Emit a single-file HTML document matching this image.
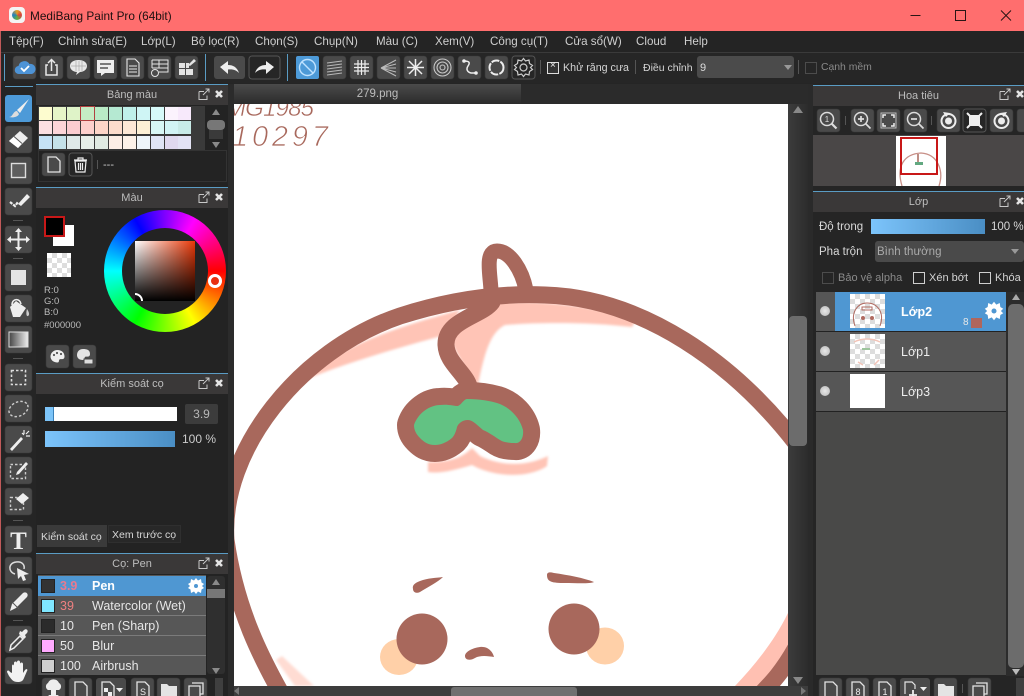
<!DOCTYPE html>
<html><head><meta charset="utf-8"><style>
html,body{margin:0;padding:0;width:1024px;height:696px;overflow:hidden;background:#252525}
body{position:relative;font-family:"Liberation Sans","DejaVu Sans",sans-serif;font-size:12px;color:#ddd}
.a{position:absolute}
.t{position:absolute;white-space:nowrap}
.m{position:absolute;white-space:nowrap;top:35px;font-size:11.6px;color:#cfcfcf}
.ph{position:absolute;height:20px;background:#3a3838;border-top:1px solid #5a9cc4;text-align:center;line-height:20px;color:#bdbdbd;font-size:11px}
.s{position:absolute;width:13px;height:12.5px}
.row{position:absolute;left:38px;width:168px;height:19px;background:#575757;border-bottom:1px solid #7b7b7b;color:#e6e6e6;line-height:21px;font-size:12.500px}
.row i{position:absolute;left:3px;top:3px;width:12px;height:12px;border:1px solid #222}
.row b{position:absolute;left:22px;font-weight:normal}
.row u{position:absolute;left:54px;text-decoration:none}
.lr{position:absolute;left:816px;width:190px;height:39px;background:#565656;border-bottom:1px solid #222}
.dot{position:absolute;left:4px;top:14px;width:10px;height:10px;border-radius:5px;background:radial-gradient(#e8e8e8,#b8b8b8)}
.th{position:absolute;left:34px;top:2px;width:35px;height:34px;background-color:#fff}
.chk{background-image:conic-gradient(#ddd 25%,#fff 0 50%,#ddd 0 75%,#fff 0);background-size:10px 10px}
.ln{position:absolute;left:85px;top:13px;font-size:12.5px;color:#eee}
.cb{position:absolute;width:10px;height:10px;border:1px solid #cfcfcf}
</style></head><body>

<!-- title bar -->
<div class="a" style="left:0;top:0;width:1024px;height:31px;background:#ff6e6e"></div>
<div class="a" style="left:9px;top:7px;width:16px;height:16px;background:#f4f4f4;border-radius:4px"></div>
<div class="a" style="left:12px;top:10px;width:10px;height:10px;border-radius:5px;background:conic-gradient(#e8a020,#d84040,#60b040,#2080c0,#e8a020)"></div>
<div class="t" style="left:30px;top:9px;font-size:11.800px;color:#1c1010">MediBang Paint Pro (64bit)</div>
<svg class="a" style="left:900px;top:0" width="124" height="31" fill="none" stroke="#2a1515" stroke-width="1"><path d="M10.500 15.500H20.500M55.500 10.500h10v10h-10zM101 10.500l10 10M111 10.500l-10 10"/></svg>

<!-- menu -->
<div class="a" style="left:0;top:31px;width:1024px;height:21px;background:#242424;border-bottom:1px solid #3a3a3a"></div>
<div class="m" style="left:9px">Tệp(F)</div>
<div class="m" style="left:58px">Chỉnh sửa(E)</div>
<div class="m" style="left:141px">Lớp(L)</div>
<div class="m" style="left:191px">Bộ lọc(R)</div>
<div class="m" style="left:255px">Chọn(S)</div>
<div class="m" style="left:314px">Chụp(N)</div>
<div class="m" style="left:376px">Màu (C)</div>
<div class="m" style="left:435px">Xem(V)</div>
<div class="m" style="left:490px">Công cụ(T)</div>
<div class="m" style="left:565px">Cửa sổ(W)</div>
<div class="m" style="left:636px">Cloud</div>
<div class="m" style="left:684px">Help</div>

<!-- toolbar -->
<div class="a" style="left:0;top:53px;width:1024px;height:30px;background:#262626"></div>
<div class="a" style="left:4px;top:54px;width:1px;height:27px;background:#5a9cc4"></div>
<div class="a" style="left:205px;top:54px;width:1px;height:27px;background:#5a9cc4"></div>
<div class="a" style="left:287px;top:54px;width:1px;height:27px;background:#5a9cc4"></div>
<div class="a" style="left:0;top:31px;width:1px;height:665px;background:#c05a5a"></div>
<div class="a" style="left:5px;top:86px;width:28px;height:1px;background:#5a9cc4"></div>
<div class="a" style="left:540px;top:60px;width:1px;height:14px;background:#555"></div>
<div class="cb" style="left:547px;top:62px;border-color:#ddd;background:#333"></div>
<div class="t" style="left:550px;top:60px;font-size:10px;color:#eee">×</div>
<div class="t" style="left:563px;top:62px;font-size:10.700px;color:#d4d4d4">Khử răng cưa</div>
<div class="a" style="left:635px;top:60px;width:1px;height:14px;background:#555"></div>
<div class="t" style="left:643px;top:62px;font-size:10.500px;color:#d4d4d4">Điều chỉnh</div>
<div class="a" style="left:697px;top:56px;width:97px;height:22px;background:#4b4b4b;border-radius:3px"></div>
<div class="t" style="left:700px;top:62px;font-size:11px;color:#ddd">9</div>
<div class="a" style="left:784px;top:65px;border:4px solid transparent;border-top:5px solid #999;border-bottom:0"></div>
<div class="a" style="left:798px;top:60px;width:1px;height:14px;background:#555"></div>
<div class="cb" style="left:805px;top:62px;border-color:#4c4c4c"></div>
<div class="t" style="left:821px;top:62px;font-size:10.400px;color:#8a8a8a">Cạnh mềm</div>

<!-- left panels background -->
<div class="a" style="left:36px;top:84px;width:192px;height:612px;background:#232323"></div>
<div class="a" style="left:228px;top:84px;width:6px;height:612px;background:#2b2b2b"></div>

<!-- palette -->
<div class="ph" style="left:36px;top:84px;width:192px">Bảng màu</div>
<div class="a" style="left:38px;top:106px;width:167px;height:44px;background:#3a3a3a"></div>
<div class="s" style="left:39px;top:107px;background:#fdfccf"></div><div class="s" style="left:53px;top:107px;background:#e6f5c8"></div><div class="s" style="left:67px;top:107px;background:#dff3c8"></div><div class="s" style="left:81px;top:107px;background:#c5ecc4;outline:1px solid #b04040"></div><div class="s" style="left:95px;top:107px;background:#b9ebc6"></div><div class="s" style="left:109px;top:107px;background:#b5e9d2"></div><div class="s" style="left:123px;top:107px;background:#bff0ea"></div><div class="s" style="left:137px;top:107px;background:#cff5f5"></div><div class="s" style="left:151px;top:107px;background:#d6f9f9"></div><div class="s" style="left:165px;top:107px;background:#fbf3fd"></div><div class="s" style="left:178px;top:107px;background:#f7e9fb"></div>
<div class="s" style="left:39px;top:121px;background:#fde0e2"></div><div class="s" style="left:53px;top:121px;background:#fdd5d8"></div><div class="s" style="left:67px;top:121px;background:#fbccd0"></div><div class="s" style="left:81px;top:121px;background:#fdd0cc"></div><div class="s" style="left:95px;top:121px;background:#fdd5c8"></div><div class="s" style="left:109px;top:121px;background:#fddccc"></div><div class="s" style="left:123px;top:121px;background:#fde8d6"></div><div class="s" style="left:137px;top:121px;background:#fdf0d5"></div><div class="s" style="left:151px;top:121px;background:#d8f7f5"></div><div class="s" style="left:165px;top:121px;background:#d2f4f5"></div><div class="s" style="left:178px;top:121px;background:#c8ebe8"></div>
<div class="s" style="left:39px;top:136px;background:#c5e2f6"></div><div class="s" style="left:53px;top:136px;background:#c5e2ea"></div><div class="s" style="left:67px;top:136px;background:#dfe9e9"></div><div class="s" style="left:81px;top:136px;background:#e7efe9"></div><div class="s" style="left:95px;top:136px;background:#e0eae2"></div><div class="s" style="left:109px;top:136px;background:#fdeee6"></div><div class="s" style="left:123px;top:136px;background:#fdf2e9"></div><div class="s" style="left:137px;top:136px;background:#eef5fa"></div><div class="s" style="left:151px;top:136px;background:#e0e5f5"></div><div class="s" style="left:165px;top:136px;background:#e0d9ef"></div><div class="s" style="left:178px;top:136px;background:#e3e3f5"></div>
<div class="a" style="left:38px;top:150px;width:187px;height:30px;border:1px solid #333"></div>
<div class="t" style="left:103px;top:159px;font-size:11px;color:#ccc">---</div>

<!-- colour -->
<div class="ph" style="left:36px;top:187px;width:192px">Màu</div>
<div class="a" style="left:53px;top:225px;width:21px;height:21px;background:#fff"></div>
<div class="a" style="left:44px;top:216px;width:17px;height:17px;background:#000;border:2px solid #c81818"></div>
<div class="a chk" style="left:47px;top:253px;width:24px;height:24px"></div>
<div class="t" style="left:44px;top:285px;font-size:9.500px;line-height:11.200px;color:#bbb">R:0<br>G:0<br>B:0</div>
<div class="t" style="left:44px;top:320px;font-size:9.500px;color:#bbb">#000000</div>
<div class="a" style="left:104px;top:210px;width:122px;height:122px;border-radius:61px;background:conic-gradient(from 90deg,#f00,#ff0,#0f0,#0ff,#00f,#f0f,#f00)"></div>
<div class="a" style="left:122px;top:228px;width:86px;height:86px;border-radius:43px;background:#232323"></div>
<div class="a" style="left:135px;top:241px;width:60px;height:60px;background:linear-gradient(to bottom,transparent,#000),linear-gradient(to right,#fff,#e83808)"></div>
<div class="a" style="left:135px;top:293px;width:8px;height:8px;border:2px solid #fff;border-left:0;border-bottom:0;border-radius:0 8px 0 0;box-sizing:border-box"></div>
<div class="a" style="left:208px;top:274px;width:8px;height:8px;border:3px solid #fff;border-radius:7px;background:#e83010"></div>

<!-- brush control -->
<div class="ph" style="left:36px;top:373px;width:192px">Kiểm soát cọ</div>
<div class="a" style="left:45px;top:407px;width:132px;height:14px;background:#fff"></div>
<div class="a" style="left:45px;top:407px;width:8px;height:14px;background:#7cc4f8;border-right:1px solid #3a80b8"></div>
<div class="a" style="left:185px;top:404px;width:33px;height:20px;background:#3c3c3c;border-radius:2px;text-align:center;line-height:20px;font-size:12px;color:#b8b8b8">3.9</div>
<div class="a" style="left:45px;top:431px;width:130px;height:16px;background:linear-gradient(to right,#7cc4fb,#4a8ec4)"></div>
<div class="t" style="left:182px;top:432px;font-size:12px;color:#ccc">100 %</div>
<div class="a" style="left:37px;top:525px;width:70px;height:22px;background:#3a3a3a"></div>
<div class="t" style="left:41px;top:531px;font-size:10.500px;color:#d8d8d8">Kiểm soát cọ</div>
<div class="a" style="left:108px;top:525px;width:73px;height:18px;background:#282828;border:1px solid #2f2f2f;box-sizing:border-box"></div>
<div class="t" style="left:112px;top:529px;font-size:10.500px;color:#d8d8d8">Xem trước cọ</div>

<!-- brush list -->
<div class="ph" style="left:36px;top:553px;width:192px">Cọ: Pen</div>
<div class="a" style="left:38px;top:575px;width:168px;height:100px;background:#575757"></div>
<div class="row" style="top:576px;background:#4f97d2;font-weight:bold;color:#fff;border-bottom:0;height:20px"><i style="background:#333"></i><b style="color:#e87a90;font-weight:bold">3.9</b><u style="font-weight:bold">Pen</u></div>
<div class="row" style="top:596px"><i style="background:#7fe6ff"></i><b style="color:#ee8080">39</b><u>Watercolor (Wet)</u></div>
<div class="row" style="top:616px"><i style="background:#2b2b2b"></i><b>10</b><u>Pen (Sharp)</u></div>
<div class="row" style="top:636px"><i style="background:#ffaaff"></i><b>50</b><u>Blur</u></div>
<div class="row" style="top:656px;border-bottom:0"><i style="background:#cfcfcf"></i><b>100</b><u>Airbrush</u></div>

<!-- document tab + canvas -->
<div class="a" style="left:234px;top:84px;width:287px;height:20px;background:linear-gradient(#4b4b4b,#2b2b2b);text-align:center;line-height:20px;font-size:11.500px;color:#bdbdbd">279.png</div>
<div class="a" style="left:521px;top:84px;width:292px;height:20px;background:#2b2b2b"></div>
<div class="a" style="left:788px;top:104px;width:20px;height:582px;background:linear-gradient(to right,#3c3c3c,#343434,#2c2c2c)"></div>
<div class="a" style="left:789px;top:316px;width:18px;height:130px;background:#6c6c6c;border-radius:4px"></div>
<div class="a" style="left:808px;top:84px;width:5px;height:612px;background:#2a2a2a"></div>
<div class="a" style="left:234px;top:686px;width:574px;height:10px;background:#3d3d3d"></div>
<div class="a" style="left:451px;top:687px;width:126px;height:9px;background:#707070;border-radius:3px 3px 0 0"></div>

<svg class="a" style="left:234px;top:104px" width="554" height="582" viewBox="234 104 554 582">
<rect x="234" y="104" width="554" height="582" fill="#fff"/>
<defs><filter id="bl"><feGaussianBlur stdDeviation="1.200"/></filter></defs>
<g fill="#ffc4b6" filter="url(#bl)">
<path d="M490 302C540 300 600 306 636 320L632 327C590 322 540 322 505 325C490 332 484 355 478 385L468 375C460 355 448 345 452 330C462 320 478 312 490 302Z"/>
<path d="M460 310C400 326 340 345 296 384C330 368 390 350 445 335Z"/>
<path d="M428 462C450 462 462 458 472 448L480 456C505 468 530 465 548 456L547 466C530 478 495 478 472 465C455 470 440 474 428 472Z"/>
<path d="M276 660L282 656L314 686H295Z" opacity=".6"/>
</g>
<path d="M788 613C775 640 755 665 735 686H765L788 650Z" fill="#ffc0b2"/>
<g fill="none" stroke="#a8685c" stroke-linecap="round" stroke-linejoin="round">
<path stroke-width="17" d="M286 702C262 660 236 610 226 540C220 450 300 350 400 316C450 300 500 293 545 295C640 298 735 360 805 455"/>
<path stroke-width="17" d="M800 640C785 670 770 685 755 700"/>
<path stroke-width="15" d="M491 292C491 278 484 251 497 251C510 251 522 270 526 290"/>
<path stroke-width="17" d="M492 302C482 316 445 320 446 345C447 365 470 375 470 392"/>
<path stroke-width="34" fill="#62c283" style="paint-order:stroke" d="M414 425C418 413 430 405 440 405C448 404 454 406 458 406C462 404 464 399 467 399C480 399 490 401 497 403C510 407 520 418 523 430C524 438 520 444 515 443C508 443 503 442 500 440C495 437 490 433 483 430C478 426 473 420 468 420C462 420 458 424 457 427C456 432 454 436 452 438C446 443 440 445 435 445C428 445 424 442 420 438C416 434 414 430 414 425Z"/>
</g>
<ellipse cx="399" cy="657" rx="19" ry="18" fill="#ffd0a8"/><ellipse cx="605" cy="646" rx="19" ry="18.500" fill="#ffd0a8"/>
<ellipse cx="422" cy="639" rx="25.500" ry="25.500" fill="#a8685c"/><ellipse cx="574" cy="629" rx="25.500" ry="25.500" fill="#a8685c"/>
<path fill="#a8685c" d="M413 589C412 585 415 583 420 581C428 578 436 578 443 577C438 582 428 587 420 592C416 594 413 592 413 589Z"/>
<path fill="#a8685c" d="M547 575C547 572 550 572 554 573C568 575 584 578 594 582C590 584 575 583 565 583C552 583 547 582 547 575Z"/>
<path fill="#a8685c" d="M465 656C465 652 472 648 480 647C488 646 493 652 494 657C488 656 480 655 475 658C470 661 465 660 465 656Z"/>
<text x="226" y="116" font-size="24" font-style="italic" fill="#a8685c" stroke="#fff" stroke-width=".5" textLength="88">MG1985</text>
<text x="232" y="146" font-size="29" font-style="italic" fill="#a8685c" stroke="#fff" stroke-width=".8" textLength="96">10297</text>
</svg>

<!-- navigator -->
<div class="a" style="left:813px;top:84px;width:211px;height:612px;background:#252525"></div>
<div class="ph" style="left:813px;top:85px;width:211px">Hoa tiêu</div>
<div class="a" style="left:813px;top:135px;width:211px;height:51px;background:#4a4747"></div>
<div class="a" style="left:896px;top:136px;width:50px;height:50px;background:#fff"></div>
<svg class="a" style="left:896px;top:136px" width="50" height="50" fill="none"><path d="M6 50C0 30 8 18 25 17C42 18 48 35 43 50" stroke="#c89088" stroke-width="1.300"/><path d="M19 26h8v3h-8z" fill="#62a880"/><path d="M22 26v-8" stroke="#a8685c" stroke-width="1.500"/><rect x="5" y="2" width="36" height="36" stroke="#c81818" stroke-width="2"/></svg>

<!-- layer -->
<div class="ph" style="left:813px;top:191px;width:211px">Lớp</div>
<div class="t" style="left:819px;top:221px;font-size:11.500px;color:#d8d8d8">Độ trong</div>
<div class="a" style="left:871px;top:219px;width:114px;height:15px;background:linear-gradient(to right,#7cc4fb,#4a8ec4)"></div>
<div class="t" style="left:991px;top:221px;font-size:11.500px;color:#d8d8d8">100 %</div>
<div class="t" style="left:819px;top:246px;font-size:11.500px;color:#d8d8d8">Pha trộn</div>
<div class="a" style="left:875px;top:241px;width:149px;height:21px;background:#4a4a4a;border-radius:3px"></div>
<div class="t" style="left:877px;top:246px;font-size:11.500px;color:#aaa">Bình thường</div>
<div class="a" style="left:1011px;top:249px;border:4px solid transparent;border-top:5px solid #999;border-bottom:0"></div>
<div class="cb" style="left:822px;top:272px;border-color:#4c4c4c"></div>
<div class="t" style="left:838px;top:272px;font-size:11px;color:#8a8a8a">Bảo vệ alpha</div>
<div class="cb" style="left:913px;top:272px"></div>
<div class="t" style="left:929px;top:272px;font-size:11px;color:#d4d4d4">Xén bớt</div>
<div class="cb" style="left:979px;top:272px"></div>
<div class="t" style="left:995px;top:272px;font-size:11px;color:#d4d4d4">Khóa</div>
<div class="a" style="left:816px;top:292px;width:190px;height:392px;background:#494948"></div>
<div class="lr" style="top:292px"><div class="a" style="left:19px;top:0;width:171px;height:39px;background:#4f97d2"></div><div class="dot"></div><div class="th chk"><svg width="35" height="34" fill="none" stroke="#b06a60"><path d="M5 32C0 18 8 9 17 9C27 9 35 18 30 32"/><path d="M12 13h10v3H12z" stroke-width="1"/><circle cx="13" cy="24" r="1.500" fill="#b06a60"/><circle cx="22" cy="24" r="1.500" fill="#b06a60"/></svg></div><div class="ln" style="font-weight:bold;color:#fff">Lớp2</div><div class="t" style="left:147px;top:25px;font-size:10px;color:#e8e8e8">8</div><div class="a" style="left:155px;top:26px;width:11px;height:10px;background:#b0665c"></div></div>
<div class="lr" style="top:332px"><div class="dot"></div><div class="th chk"><svg width="35" height="34" fill="none"><path d="M12 14h8v2h-8z" fill="#9cc49c"/><path d="M4 8c8-4 18-4 26 0M8 28l5 3M24 31l5-5" stroke="#f2c4b8" stroke-width="1.500"/></svg></div><div class="ln">Lớp1</div></div>
<div class="lr" style="top:372px"><div class="dot"></div><div class="th"></div><div class="ln">Lớp3</div></div>
<div class="a" style="left:1006px;top:292px;width:18px;height:392px;background:#2c2c2c"></div>
<div class="a" style="left:1008px;top:304px;width:16px;height:364px;background:#6c6c6c;border-radius:5px"></div>

<!-- icons overlay -->
<svg class="a" style="left:0;top:0;pointer-events:none" width="1024" height="696" viewBox="0 0 1024 696">
<defs>
<rect id="b" width="23" height="23" rx="3" fill="#4a4a4a" stroke="#383838" stroke-width=".6"/>
<rect id="T" width="27" height="27" rx="3" fill="#4a4a4a" stroke="#383838" stroke-width=".6"/>
<path id="pg" d="M6 4h8l4 4v11H6z" fill="none" stroke="#e4e4e4" stroke-width="1.300"/>
<g id="pi"><path d="M1 2.500h5M1 2.500v8h8v-4M5 6l6-6M7.500 0H11v3.500" fill="none" stroke="#c8c8c8" stroke-width="1"/><path d="M18 2l6 6M24 2l-6 6" stroke="#e4e4e4" stroke-width="2.600"/></g>
<path id="gear" d="M0-8L2-5.500 5-7 5.500-3.500 8-2 6 0 8 2 5.500 3.500 5 7 2 5.500 0 8-2 5.500-5 7-5.500 3.500-8 2-6 0-8-2-5.500-3.500-5-7-2-5.500z" fill="#fff"/>
<linearGradient id="gg"><stop offset="0" stop-color="#444"/><stop offset="1" stop-color="#eee"/></linearGradient>
</defs>

<!-- top toolbar -->
<g transform="translate(13,56)"><use href="#b"/><path d="M6 18a4 4 0 0 1-.5-8 6 6 0 0 1 11-2 5 5 0 0 1 2 10z" fill="#4d93d6"/><path d="M8 12l3 3 5-5" fill="none" stroke="#fff" stroke-width="1.800"/></g>
<g transform="translate(40,56)"><use href="#b"/><path d="M8 9H6v10h11V9h-2M11.500 15V4M8 7l3.500-3.500L15 7" fill="none" stroke="#e8e8e8" stroke-width="1.500"/></g>
<g transform="translate(67,56)"><use href="#b"/><path d="M3 10c0-4 4-6 8.500-6s8.500 2 8.500 6-4 6-7 6l-4 3 1-3c-3 0-7-2-7-6z" fill="#e8e8e8"/><path d="M9 5v10M12 5v10M15 5v10M4 10h15" stroke="#aaa" stroke-width=".7"/></g>
<g transform="translate(94,56)"><use href="#b"/><path d="M3 4h17v13h-9l-4 3v-3H3z" fill="#eee"/><path d="M6 8h11M6 12h8" stroke="#555" stroke-width="1.600"/></g>
<g transform="translate(121,56)"><use href="#b"/><path d="M6 3h8l4 4v13H6zM8 10h8M8 13h8M8 16h8" fill="none" stroke="#e8e8e8" stroke-width="1.100"/></g>
<g transform="translate(148,56)"><use href="#b"/><path d="M4 4h16v12H11M4 4v8M4 8h16M4 12h16M11 4v8" fill="none" stroke="#e4e4e4" stroke-width="1"/><circle cx="7" cy="17" r="3.500" fill="none" stroke="#e4e4e4"/></g>
<g transform="translate(175,56)"><use href="#b"/><path d="M4 7h6v5H4zM11 7h3v5h-3zM4 13h6v6H4zM11 13h7v6h-7z" fill="#e4e4e4"/><path d="M13 9l6-6 2 2-6 5z" fill="#e4e4e4"/></g>
<g transform="translate(214,56)"><rect width="31" height="23" rx="3" fill="#4a4a4a"/><path d="M6 11l8-6v4c5 0 9 2 11 8-3-3-6-4-11-3.500V18z" fill="#eee"/></g>
<g transform="translate(249,56)"><rect width="31" height="23" rx="3" fill="#262626" stroke="#555"/><path d="M25 11l-8-6v4c-5 0-9 2-11 8 3-3 6-4 11-3.500V18z" fill="#eee"/></g>
<g transform="translate(296,56)"><rect width="23" height="23" rx="2" fill="#4d9ad8"/><circle cx="11.500" cy="11.500" r="8" fill="none" stroke="#bfe2ff" stroke-width="1.400"/><path d="M6 6l11 11" stroke="#bfe2ff" stroke-width="1.400"/></g>
<g transform="translate(323,56)"><use href="#b"/><path d="M4 7l15-2M4 10l15-2M4 13l15-2M4 16l15-2M4 19l15-2" stroke="#b8b8b8" stroke-width="1.100"/></g>
<g transform="translate(350,56)"><use href="#b"/><path d="M8 4v15M11.500 4v15M15 4v15M4 8h15M4 11.500h15M4 15h15" stroke="#eee" stroke-width="1.200"/></g>
<g transform="translate(377,56)"><use href="#b"/><path d="M4 12L19 4M4 12L19 8M4 12h15M4 12l15 4M4 12l15 8" stroke="#bbb" stroke-width="1"/></g>
<g transform="translate(404,56)"><use href="#b"/><path d="M11.500 3v17M3 11.500h17M5 5l13 13M18 5L5 18" stroke="#eee" stroke-width="1.500"/></g>
<g transform="translate(431,56)" fill="none" stroke="#c8c8c8" stroke-width="1.100"><use href="#b"/><circle cx="11.500" cy="11.500" r="8.500"/><circle cx="11.500" cy="11.500" r="5.500"/><circle cx="11.500" cy="11.500" r="2.500"/></g>
<g transform="translate(458,56)"><use href="#b"/><path d="M6 5c6 0 6 2 4 5s-1 6 3 7h4" fill="none" stroke="#eee" stroke-width="1.500"/><circle cx="6" cy="5" r="1.800" fill="#eee"/><circle cx="18" cy="17" r="1.800" fill="#eee"/></g>
<g transform="translate(485,56)"><use href="#b"/><circle cx="11.500" cy="11.500" r="7" fill="none" stroke="#eee" stroke-width="2" stroke-dasharray="8 1.200"/></g>
<g transform="translate(512,56)"><rect width="23" height="23" rx="3" fill="#262626" stroke="#555"/><g transform="translate(11.500,11.500)"><path d="M0-9L2-6.500 5.500-7.500 6-4 9-2 7 0 9 2 6 4 5.500 7.500 2 6.500 0 9-2 6.500-5.500 7.500-6 4-9 2-7 0-9-2-6-4-5.500-7.500-2-6.500z" fill="none" stroke="#ccc" stroke-width="1.200"/><circle r="3.500" fill="none" stroke="#ccc" stroke-width="1.200"/></g></g>

<!-- tool column -->
<g transform="translate(5,95)"><rect width="27" height="27" rx="3" fill="#4d9ad8"/><path d="M24 4L12 15l3 3z" fill="#eee"/><path d="M4 22c4 0 4-6 8-6l2 3c-1 3-6 4-10 3z" fill="#ddd"/></g>
<g transform="translate(5,126)"><use href="#T"/><path d="M4 15L15 5l8 7-10 10z" fill="#eee"/><path d="M4 15l5-4.500 8 7L13 22z" fill="#fff"/><path d="M9 10.500l8 7" stroke="#555"/></g>
<g transform="translate(5,157)"><use href="#T"/><rect x="6.500" y="6.500" width="14" height="14" fill="#5e5e5e" stroke="#ddd" stroke-width="1.400"/></g>
<g transform="translate(5,188)"><use href="#T"/><path d="M5 14l5 4 3-4" fill="none" stroke="#eee" stroke-width="2.200" stroke-dasharray="3 1"/><path d="M13 16l9-10 3 3-9 9z" fill="#eee"/></g>
<rect x="13" y="220" width="10" height="1" fill="#555"/>
<g transform="translate(5,226)"><use href="#T"/><path d="M13.500 4v19M4 13.500h19" stroke="#eee" stroke-width="2"/><path d="M13.500 2l3.500 4h-7zM13.500 25l3.500-4h-7zM2 13.500l4-3.500v7zM25 13.500l-4-3.500v7z" fill="#eee"/></g>
<rect x="13" y="258" width="10" height="1" fill="#555"/>
<g transform="translate(5,264)"><use href="#T"/><rect x="6" y="6" width="15" height="15" fill="#e4e4e4"/></g>
<g transform="translate(5,295)"><use href="#T"/><path d="M5 12L11 6l10 7-6 9H8z" fill="#eee"/><path d="M7 10C7 3 15 3 16 9" fill="none" stroke="#eee" stroke-width="1.500"/><path d="M22 14c2 3 3 6 1 7s-2-4-1-7z" fill="#ccc"/></g>
<g transform="translate(5,326)"><use href="#T"/><rect x="4" y="6" width="19" height="15" fill="url(#gg)" stroke="#ddd"/></g>
<rect x="13" y="358" width="10" height="1" fill="#555"/>
<g transform="translate(5,364)"><use href="#T"/><rect x="6.500" y="6.500" width="14" height="14" fill="none" stroke="#ddd" stroke-width="1.600" stroke-dasharray="2.500 2"/></g>
<g transform="translate(5,395)"><use href="#T"/><ellipse cx="13.500" cy="14" rx="10" ry="7" transform="rotate(-25 13.500 14)" fill="none" stroke="#ccc" stroke-width="1.400" stroke-dasharray="2.500 2"/></g>
<g transform="translate(5,426)"><use href="#T"/><path d="M5 23L16 11l2 2L7 25z" fill="#eee"/><path d="M19 4v4M21 10h4M17 7l2 2M24 5l-3 3" stroke="#eee" stroke-width="1.200"/></g>
<g transform="translate(5,457)"><use href="#T"/><rect x="5.500" y="7.500" width="15" height="14" fill="none" stroke="#ccc" stroke-width="1.400" stroke-dasharray="2.500 2"/><path d="M12 15L21 5l2 2-9 10-3 1z" fill="#eee"/></g>
<g transform="translate(5,488)"><use href="#T"/><rect x="5.500" y="9.500" width="13" height="12" fill="none" stroke="#ccc" stroke-width="1.400" stroke-dasharray="2.500 2"/><path d="M11 11l7-6 6 5-7 6z" fill="#eee"/></g>
<rect x="13" y="520" width="10" height="1" fill="#555"/>
<g transform="translate(5,526)"><use href="#T"/><text x="13.500" y="23" font-family="Liberation Serif,serif" font-weight="bold" font-size="25" fill="#eee" text-anchor="middle">T</text></g>
<g transform="translate(5,557)"><use href="#T"/><path d="M10 17C3 15 3 6 11 5c6-1 9 3 8 7" fill="none" stroke="#ddd" stroke-width="1.500"/><path d="M12 11l12 6-5 1 2 5-3 1-2-5-3 3z" fill="#eee"/></g>
<g transform="translate(5,588)"><use href="#T"/><path d="M5 23L7 16 18 5c3-2 6 1 4 4L11 20z" fill="#eee"/><path d="M8 15l6 6" stroke="#555"/></g>
<rect x="13" y="620" width="10" height="1" fill="#555"/>
<g transform="translate(5,626)"><use href="#T"/><path d="M5 24l1-5 9-9 3 3-9 9z" fill="none" stroke="#eee" stroke-width="1.500"/><path d="M14 8l5 5 2-2-1-2 2-2c2-3-1-5-3-3l-2 2-2-1z" fill="#eee"/></g>
<g transform="translate(5,657)"><use href="#T"/><path d="M7 16V9c0-2 2-2 2 0v3V6c0-2 3-2 3 0v6V5c0-2 3-2 3 0v7V7c0-2 3-2 3 0v9l2-3c2-2 3 0 2 1l-3 7c-1 3-3 4-6 4-5 0-6-2-9-6l-2-4c0-2 2-2 3 0z" fill="#f2f2f2"/></g>

<!-- panel header icons -->
<use href="#pi" x="198" y="89"/><use href="#pi" x="198" y="192"/><use href="#pi" x="198" y="378"/><use href="#pi" x="198" y="558"/>
<use href="#pi" x="999" y="89"/><use href="#pi" x="999" y="196"/>

<!-- palette scroll + buttons -->
<path d="M216 109l4 6h-8zM216 148l4-6h-8z" fill="#8a8a8a"/><rect x="207" y="120" width="18" height="10" rx="4" fill="#777"/><rect x="209" y="130" width="14" height="9" fill="#3a3a3a"/>
<g transform="translate(42,153)"><use href="#b"/><use href="#pg"/></g>
<g transform="translate(69,153)"><rect width="23" height="23" rx="3" fill="#262626" stroke="#555"/><path d="M6 8h11l-1 11H7zM5 7h13M9 7V5h5v2M9.500 10v7M11.500 10v7M13.500 10v7" fill="none" stroke="#eee" stroke-width="1.200"/></g>
<rect x="97" y="160" width="1" height="9" fill="#555"/>

<!-- colour buttons -->
<g transform="translate(46,345)"><use href="#b" /><path d="M11.500 5c-4 0-7 3-7 6.500s3 6 7 6c2 0 1-2 2-3s5 1 5-3-3-6.500-7-6.500z" fill="#eee"/><circle cx="8" cy="10" r="1.100" fill="#555"/><circle cx="11" cy="8" r="1.100" fill="#555"/><circle cx="15" cy="9" r="1.100" fill="#555"/></g>
<g transform="translate(73,345)"><use href="#b"/><path d="M10 4c-4 0-6 3-6 6s2 5 6 5c2 0 1-2 2-3s5 1 5-3-3-5-7-5z" fill="#e4e4e4"/><rect x="11" y="14" width="9" height="5" fill="#ddd" stroke="#444"/></g>

<!-- brush list -->
<g transform="translate(196,586)"><use href="#gear"/><circle r="2" fill="#4f97d2"/></g>
<rect x="207" y="576" width="18" height="98" rx="3" fill="#2f2f2f"/><rect x="207" y="589" width="18" height="9" fill="#777"/>
<path d="M216 579l4 6h-8zM216 674l4-6h-8z" fill="#8a8a8a"/>
<g>
<g transform="translate(42,678)"><use href="#b"/><path d="M6 12a4 4 0 0 1 0-7 6 6 0 0 1 11 0 4 4 0 0 1 0 7h-3v5h3l-5.500 4L6 17h3v-5z" fill="#eee"/></g>
<g transform="translate(69,678)"><use href="#b"/><use href="#pg"/></g>
<g transform="translate(96,678)"><rect width="30" height="23" rx="3" fill="#4a4a4a"/><use href="#pg"/><rect x="8" y="10" width="4" height="4" fill="#eee"/><rect x="12" y="14" width="4" height="4" fill="#eee"/><path d="M20 10h7l-3.500 4z" fill="#eee"/></g>
<g transform="translate(131,678)"><use href="#b"/><use href="#pg"/><text x="12" y="17" font-size="9" fill="#eee" text-anchor="middle">S</text></g>
<g transform="translate(157,678)"><use href="#b"/><path d="M4 6h6l2 2h8v12H4z" fill="#e4e4e4"/></g>
<g transform="translate(184,678)"><use href="#b"/><path d="M8 5h11v11h-3M5 8h11v11H5z" fill="none" stroke="#e4e4e4" stroke-width="1.300"/></g>
<rect x="215" y="678" width="8" height="18" fill="#3f3f3f"/>
</g>

<!-- canvas scrollbar arrows -->
<path d="M798 106l5 7h-10zM798 684l5-7h-10z" fill="#888"/>
<path d="M234 691l5-4v8zM806 691l-5-4v8z" fill="#777"/>

<!-- navigator buttons -->
<g transform="translate(817,109)"><use href="#b"/><circle cx="10" cy="10" r="6.500" fill="none" stroke="#ddd" stroke-width="1.500"/><path d="M14.500 14.500l5 5" stroke="#ddd" stroke-width="2.200"/><text x="10" y="13" font-size="8" fill="#ddd" text-anchor="middle">1</text></g>
<rect x="845" y="116" width="1" height="9" fill="#555"/>
<g transform="translate(851,109)"><use href="#b"/><circle cx="10" cy="10" r="6.500" fill="none" stroke="#ddd" stroke-width="1.500"/><path d="M14.500 14.500l5 5M7 10h6M10 7v6" stroke="#ddd" stroke-width="1.700"/></g>
<g transform="translate(877,109)"><use href="#b"/><rect x="4" y="4" width="15" height="15" fill="none" stroke="#bbb"/><path d="M6 9V6h3M14 6h3v3M6 14v3h3M17 14v3h-3" fill="none" stroke="#eee" stroke-width="1.500"/></g>
<g transform="translate(904,109)"><use href="#b"/><circle cx="10" cy="10" r="6.500" fill="none" stroke="#ddd" stroke-width="1.500"/><path d="M14.500 14.500l5 5M7 10h6" stroke="#ddd" stroke-width="1.700"/></g>
<rect x="931" y="116" width="1" height="9" fill="#555"/>
<g transform="translate(937,109)"><use href="#b"/><circle cx="11.500" cy="12" r="7" fill="none" stroke="#eee" stroke-width="2"/><circle cx="11.500" cy="12" r="3.500" fill="#eee"/><path d="M6 3l7 1-4 4z" fill="#eee"/></g>
<g transform="translate(963,109)"><rect width="23" height="23" rx="3" fill="#262626" stroke="#555"/><rect x="6" y="6" width="11" height="11" fill="#eee"/><path d="M4 4l3 3M19 4l-3 3M4 19l3-3M19 19l-3-3" stroke="#eee" stroke-width="2"/></g>
<g transform="translate(990,109)"><use href="#b"/><circle cx="11.500" cy="12" r="7" fill="none" stroke="#eee" stroke-width="2"/><circle cx="11.500" cy="12" r="3.500" fill="#eee"/><path d="M17 3l-7 1 4 4z" fill="#eee"/></g>
<g transform="translate(1017,109)"><use href="#b"/></g>

<!-- layer extras -->
<g transform="translate(994,311) scale(1.150)"><use href="#gear"/><circle r="2.200" fill="#4f97d2"/></g>
<path d="M1016 294l4 6h-8z" fill="#aaa"/>
<rect x="813" y="675" width="211" height="21" fill="#252525"/>
<rect x="1006" y="668" width="18" height="8" fill="#2c2c2c"/>
<path d="M1016 675l4-6h-8z" fill="#bbb"/>
<g transform="translate(819,678)"><use href="#b"/><use href="#pg"/></g>
<g transform="translate(846,678)"><use href="#b"/><use href="#pg"/><text x="12" y="17" font-size="9" fill="#eee" text-anchor="middle">8</text></g>
<g transform="translate(873,678)"><use href="#b"/><use href="#pg"/><text x="12" y="17" font-size="9" fill="#eee" text-anchor="middle">1</text></g>
<g transform="translate(900,678)"><rect width="30" height="23" rx="3" fill="#4a4a4a"/><path d="M5 16V4h7l3 3v4" fill="none" stroke="#e4e4e4" stroke-width="1.200"/><path d="M13 12v9M9 17h8" stroke="#eee" stroke-width="1.800"/><path d="M20 9h7l-3.500 4z" fill="#eee"/></g>
<g transform="translate(934,678)"><use href="#b"/><path d="M4 6h6l2 2h8v12H4z" fill="#e4e4e4"/></g>
<rect x="962" y="684" width="1" height="9" fill="#555"/>
<g transform="translate(968,678)"><use href="#b"/><path d="M8 5h11v11h-3M5 8h11v11H5z" fill="none" stroke="#e4e4e4" stroke-width="1.300"/></g>
<rect x="1016" y="678" width="8" height="18" fill="#3f3f3f"/>
</svg>
</body></html>
